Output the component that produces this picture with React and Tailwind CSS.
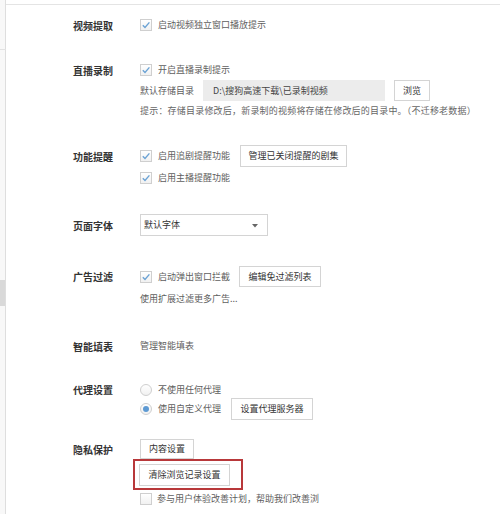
import React from "react";

function Check({ checked }) {
  return (
    <span className="inline-flex h-[12px] w-[12px] shrink-0 items-center justify-center border border-[#cfcfcf] bg-gradient-to-b from-white to-[#f1f1f1]">
      {checked && (
        <svg width="10" height="10" viewBox="0 0 10 10">
          <path d="M1.8 5.2 L4 7.4 L8.4 2.4" fill="none" stroke="#6aa2d4" strokeWidth="1.4" />
        </svg>
      )}
    </span>
  );
}

function Radio({ checked }) {
  return (
    <span className="inline-flex h-[12px] w-[12px] shrink-0 items-center justify-center rounded-full border border-[#cfcfcf] bg-gradient-to-b from-white to-[#f1f1f1]">
      {checked && <span className="h-[6px] w-[6px] rounded-full bg-[#5e9ad3]" />}
    </span>
  );
}

function Btn({ children, className = "" }) {
  return (
    <span
      className={`inline-flex items-center justify-center border border-[#d4d4d4] bg-white text-[9px] text-[#333] ${className}`}
    >
      {children}
    </span>
  );
}

function Label({ children, h }) {
  return (
    <div className={`flex w-[67px] shrink-0 items-center text-[10px] font-bold text-[#333] ${h}`}>
      {children}
    </div>
  );
}

export default function App() {
  return (
    <div className="relative flex h-[514px] w-[500px] overflow-hidden bg-white font-['Noto_Sans_CJK_SC',sans-serif] text-[9px] text-[#5e5e5e]">
      {/* left strip */}
      <div className="relative w-[6px] shrink-0 border-r border-[#dedede] bg-[#f8f8f8]">
        <div className="absolute left-0 top-[49px] h-px w-[6px] bg-[#e2e2e2]" />
        <div className="absolute left-0 top-[280px] h-[26px] w-[5px] bg-[#d9d9d9]" />
      </div>

      <div className="flex flex-1 flex-col">
        <div className="mt-[4px] h-px w-full bg-[#e4e4e4]" />

        <div className="flex flex-col pl-[67px]">
          {/* 视频提取 */}
          <div className="mt-[10px] flex">
            <Label h="h-[20px]">视频提取</Label>
            <div className="flex h-[20px] items-center gap-[6px]">
              <Check checked />
              <span>启动视频独立窗口播放提示</span>
            </div>
          </div>

          {/* 直播录制 */}
          <div className="mt-[25px] flex">
            <Label h="h-[20px]">直播录制</Label>
            <div className="flex flex-col">
              <div className="flex h-[20px] items-center gap-[6px]">
                <Check checked />
                <span>开启直播录制提示</span>
              </div>
              <div className="flex h-[21px] items-center">
                <span className="w-[63px]">默认存储目录</span>
                <span className="flex h-[21px] w-[182px] items-center bg-[#ececec] pl-[10px] text-[#444]">
                  D:\搜狗高速下载\已录制视频
                </span>
                <Btn className="ml-[9px] h-[21px] w-[36px]">浏览</Btn>
              </div>
              <div className="flex h-[20px] items-center whitespace-nowrap text-[#666] tracking-[0.2px]">
                提示：存储目录修改后，新录制的视频将存储在修改后的目录中。（不迁移老数据）
              </div>
            </div>
          </div>

          {/* 功能提醒 */}
          <div className="mt-[24px] flex">
            <Label h="h-[22px]">功能提醒</Label>
            <div className="flex flex-col">
              <div className="flex h-[22px] items-center">
                <Check checked />
                <span className="ml-[6px]">启用追剧提醒功能</span>
                <Btn className="ml-[10px] h-[22px] w-[107px]">管理已关闭提醒的剧集</Btn>
              </div>
              <div className="flex h-[21px] items-center gap-[6px]">
                <Check checked />
                <span>启用主播提醒功能</span>
              </div>
            </div>
          </div>

          {/* 页面字体 */}
          <div className="mt-[26px] flex">
            <Label h="h-[22px]">页面字体</Label>
            <div className="relative flex h-[22px] w-[128px] items-center border border-[#d4d4d4] bg-white pl-[3px] text-[#333]">
              默认字体
              <svg className="absolute right-[9px] top-[9px]" width="6" height="4" viewBox="0 0 6 4">
                <path d="M0 0 L6 0 L3 3.5 Z" fill="#666" />
              </svg>
            </div>
          </div>

          {/* 广告过滤 */}
          <div className="mt-[30px] flex">
            <Label h="h-[21px]">广告过滤</Label>
            <div className="flex flex-col">
              <div className="flex h-[21px] items-center">
                <Check checked />
                <span className="ml-[6px]">启动弹出窗口拦截</span>
                <Btn className="ml-[9px] h-[21px] w-[82px]">编辑免过滤列表</Btn>
              </div>
              <div className="mt-[2px] flex h-[20px] items-center">使用扩展过滤更多广告...</div>
            </div>
          </div>

          {/* 智能填表 */}
          <div className="mt-[27px] flex">
            <Label h="h-[20px]">智能填表</Label>
            <div className="flex h-[20px] items-center">管理智能填表</div>
          </div>

          {/* 代理设置 */}
          <div className="mt-[25px] flex">
            <Label h="h-[17px]">代理设置</Label>
            <div className="flex flex-col">
              <div className="flex h-[17px] items-center gap-[6px]">
                <Radio />
                <span>不使用任何代理</span>
              </div>
              <div className="flex h-[22px] items-center">
                <Radio checked />
                <span className="ml-[6px]">使用自定义代理</span>
                <Btn className="ml-[10px] h-[22px] w-[82px]">设置代理服务器</Btn>
              </div>
            </div>
          </div>

          {/* 隐私保护 */}
          <div className="mt-[19px] flex">
            <Label h="h-[20px]">隐私保护</Label>
            <div className="flex flex-col">
              <Btn className="h-[20px] w-[54px]">内容设置</Btn>
              <div className="ml-[-7px] flex h-[31px] w-[110px] items-center border-2 border-[#b8383a] pl-[4px]">
                <Btn className="h-[22px] w-[91px]">清除浏览记录设置</Btn>
              </div>
              <div className="mt-[2px] flex h-[14px] items-center gap-[5px]">
                <Check />
                <span className="whitespace-nowrap">参与用户体验改善计划，帮助我们改善浏</span>
              </div>
            </div>
          </div>
        </div>
      </div>
    </div>
  );
}
